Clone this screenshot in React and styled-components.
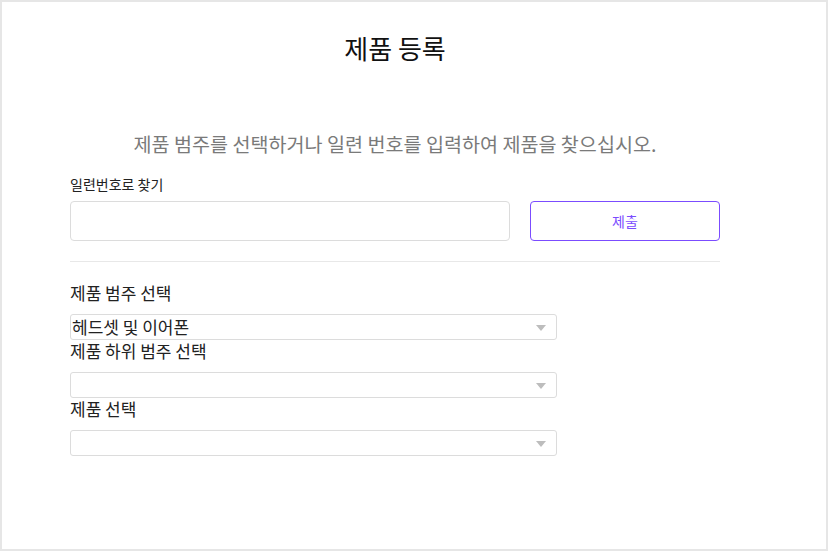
import React from 'react';
import styled, { createGlobalStyle } from 'styled-components';

const Global = createGlobalStyle`
  html, body {
    margin: 0;
    padding: 0;
    background: #fff;
  }
  body {
    font-family: "Noto Sans CJK KR", "Noto Sans", sans-serif;
    color: #222;
  }
`;

const Page = styled.div`
  box-sizing: border-box;
  width: 828px;
  height: 551px;
  border: 2px solid #e6e6e6;
  background: #fff;
  padding: 0 0 0 68px;
`;

const Content = styled.div`
  width: 650px;
`;

const Title = styled.h1`
  margin: 0;
  padding-top: 29px;
  font-size: 26px;
  font-weight: 400;
  line-height: 34px;
  text-align: center;
  color: #111;
`;

const Subtitle = styled.p`
  margin: 65px 0 0;
  font-size: 19.6px;
  line-height: 28px;
  color: #7a7a7a;
  text-align: center;
`;

const SmallLabel = styled.div`
  margin-top: 16px;
  font-size: 14px;
  line-height: 20px;
  color: #222;
`;

const SearchRow = styled.div`
  display: flex;
  gap: 20px;
  margin-top: 7px;
`;

const TextInput = styled.input`
  box-sizing: border-box;
  flex: 1;
  height: 40px;
  border: 1px solid #dcdcdc;
  border-radius: 4px;
  background: #fff;
  padding: 0 10px;
  font-size: 14px;
  outline: none;
`;

const SubmitButton = styled.button`
  box-sizing: border-box;
  width: 190px;
  height: 40px;
  border: 1px solid #7b4cff;
  border-radius: 4px;
  background: #fff;
  color: #7b4cff;
  font-family: inherit;
  font-size: 14px;
  cursor: pointer;
`;

const Divider = styled.hr`
  margin: 20px 0 20px;
  border: 0;
  border-top: 1px solid #e8e8e8;
`;

const Field = styled.div`
  display: flex;
  flex-direction: column;
  width: 487px;
`;

const FieldLabel = styled.label`
  font-size: 17px;
  line-height: 22px;
  margin-bottom: 10px;
  color: #222;
`;

const SelectBox = styled.div`
  box-sizing: border-box;
  position: relative;
  height: 26px;
  border: 1px solid #dcdcdc;
  border-radius: 3px;
  font-size: 17px;
  line-height: 24px;
  color: #222;
  padding-left: 1px;
`;

const Caret = styled.span`
  position: absolute;
  right: 10px;
  top: 10px;
  width: 0;
  height: 0;
  border-left: 5px solid transparent;
  border-right: 5px solid transparent;
  border-top: 6px solid #bdbdbd;
`;

function Select({ value }) {
  return (
    <SelectBox>
      {value}
      <Caret />
    </SelectBox>
  );
}

export default function App() {
  return (
    <>
      <Global />
      <Page>
        <Content>
          <Title>제품 등록</Title>
          <Subtitle>제품 범주를 선택하거나 일련 번호를 입력하여 제품을 찾으십시오.</Subtitle>
          <SmallLabel>일련번호로 찾기</SmallLabel>
          <SearchRow>
            <TextInput />
            <SubmitButton>제출</SubmitButton>
          </SearchRow>
          <Divider />
          <Field>
            <FieldLabel>제품 범주 선택</FieldLabel>
            <Select value="헤드셋 및 이어폰" />
            <FieldLabel>제품 하위 범주 선택</FieldLabel>
            <Select />
            <FieldLabel>제품 선택</FieldLabel>
            <Select />
          </Field>
        </Content>
      </Page>
    </>
  );
}
